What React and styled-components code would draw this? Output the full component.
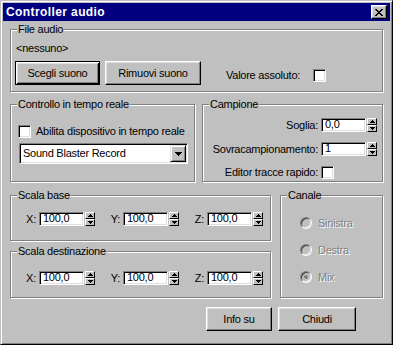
import React from "react";
import styled, { createGlobalStyle, css } from "styled-components";

const face = "#c0c0c0";

const GlobalStyle = createGlobalStyle`
  html, body {
    margin: 0;
    padding: 0;
    background: ${face};
  }
  body {
    font-family: "Liberation Sans", Arial, sans-serif;
    font-size: 11px;
    letter-spacing: -0.25px;
    color: #000;
  }
  * {
    box-sizing: border-box;
  }
`;

const Window = styled.div`
  width: 393px;
  height: 345px;
  background: ${face};
  border: 1px solid;
  border-color: ${face} #000 #000 ${face};
  box-shadow: inset 1px 1px #fff, inset -1px -1px #808080;
  padding: 2px;
  display: flex;
  flex-direction: column;
`;

const TitleBar = styled.div`
  height: 18px;
  flex: none;
  background: #000080;
  display: flex;
  align-items: center;
  justify-content: space-between;
  padding: 0 3px;
`;

const Title = styled.span`
  color: #fff;
  font-weight: bold;
  font-size: 12px;
  letter-spacing: 0.4px;
  line-height: 18px;
`;

const raised = css`
  background: ${face};
  border: 1px solid;
  border-color: #fff #000 #000 #fff;
  box-shadow: inset -1px -1px #808080, inset 1px 1px #dfdfdf;
`;

const sunken = css`
  border: 1px solid;
  border-color: #808080 #fff #fff #808080;
  box-shadow: inset 1px 1px #000, inset -1px -1px #dfdfdf;
`;

const CloseButton = styled.div`
  ${raised};
  width: 16px;
  height: 14px;
  display: flex;
  align-items: center;
  justify-content: center;
`;

const Body = styled.div`
  padding: 8px 7px 0;
  display: flex;
  flex-direction: column;
`;

const Group = styled.div`
  position: relative;
  height: ${(p) => p.$h}px;
  border: 1px solid #808080;
  box-shadow: 1px 1px 0 #fff, inset 1px 1px 0 #fff;
  padding: ${(p) => p.$pad || "0"};
`;

const Legend = styled.span`
  position: absolute;
  top: -7px;
  left: 6px;
  padding: 0 1px;
  background: ${face};
  line-height: 13px;
  white-space: nowrap;
`;

const Line = styled.div`
  line-height: 13px;
  margin-left: ${(p) => p.$ml || 0}px;
`;

const ButtonRow = styled.div`
  display: flex;
  align-items: center;
  margin-top: ${(p) => p.$mt || 0}px;
  justify-content: ${(p) => p.$justify || "flex-start"};
  padding-right: ${(p) => p.$pr || 0}px;
`;

const Button = styled.div`
  ${raised};
  width: ${(p) => p.$w}px;
  height: 24px;
  margin-left: ${(p) => p.$ml || 0}px;
  display: flex;
  align-items: center;
  justify-content: center;
  line-height: 13px;
  ${(p) =>
    p.$default &&
    css`
      border-color: #000;
      box-shadow: inset 1px 1px #fff, inset -1px -1px #000,
        inset 2px 2px #dfdfdf, inset -2px -2px #808080;
    `}
`;

const CheckField = styled.div`
  width: 100px;
  margin: 5px 0 0 ${(p) => p.$ml || 0}px;
  display: flex;
  align-items: center;
  justify-content: space-between;
  line-height: 13px;
`;

const CheckBox = styled.span`
  ${sunken};
  display: inline-block;
  flex: none;
  width: 13px;
  height: 13px;
  background: #fff;
  margin-left: ${(p) => p.$ml || 0}px;
`;

const CheckRow = styled.div`
  display: flex;
  align-items: center;
  line-height: 13px;
  white-space: nowrap;
`;

const CheckLabel = styled.span`
  margin-left: 5px;
`;

const TwoCols = styled.div`
  display: grid;
  grid-template-columns: ${(p) => p.$cols};
  column-gap: ${(p) => p.$gap}px;
  margin-top: ${(p) => p.$mt}px;
  align-items: start;
`;

const Stack = styled.div`
  display: flex;
  flex-direction: column;
  gap: ${(p) => p.$gap}px;
`;

const Combo = styled.div`
  ${sunken};
  margin: 5px 0 0 4px;
  width: 169px;
  height: 21px;
  background: #fff;
  display: flex;
  align-items: center;
  padding: 1px;
`;

const ComboText = styled.span`
  flex: 1;
  padding-left: 2px;
  line-height: 17px;
  white-space: nowrap;
`;

const DropButton = styled.div`
  width: 16px;
  height: 17px;
  background: ${face};
  border: 1px solid;
  border-color: #dfdfdf #000 #000 #dfdfdf;
  box-shadow: inset 1px 1px #fff, inset -1px -1px #808080;
  display: flex;
  align-items: center;
  justify-content: center;
`;

const FormRow = styled.div`
  display: grid;
  grid-template-columns: 1fr 56px;
  align-items: center;
  height: ${(p) => p.$h}px;
  margin-top: ${(p) => p.$mt || 0}px;
`;

const RowLabel = styled.span`
  text-align: right;
  padding-right: 3px;
  line-height: 14px;
  white-space: nowrap;
`;

const Controls = styled.div`
  display: flex;
  align-items: center;
`;

const Field = styled.div`
  ${sunken};
  width: 45px;
  height: 14px;
  background: #fff;
  padding-left: 3px;
  line-height: 10px;
  white-space: nowrap;
`;

const Spinner = styled.div`
  width: 10px;
  height: 14px;
  margin-left: 1px;
  display: flex;
  flex-direction: column;
`;

const SpinButton = styled.div`
  flex: 1;
  background: ${face};
  border: 1px solid;
  border-color: #fff #000 #000 #fff;
  display: flex;
  align-items: center;
  justify-content: center;
`;

const Trios = styled.div`
  display: flex;
  align-items: center;
`;

const AxisLabel = styled.span`
  width: 28px;
  text-align: right;
  padding-right: 3px;
  line-height: 14px;
`;

const RadioList = styled.div`
  display: flex;
  flex-direction: column;
  gap: 15px;
  padding-left: 19px;
`;

const RadioRow = styled.div`
  display: flex;
  align-items: center;
  height: 12px;
`;

const Radio = styled.span`
  width: 12px;
  height: 12px;
  flex: none;
  border-radius: 50%;
  border: 1px solid;
  border-color: #808080 #fff #fff #808080;
  box-shadow: inset 1px 1px #404040, inset -1px -1px #dfdfdf;
  background: ${face};
  display: flex;
  align-items: center;
  justify-content: center;
`;

const Dot = styled.span`
  width: 4px;
  height: 4px;
  border-radius: 50%;
  background: #808080;
`;

const DisabledText = styled.span`
  margin-left: 6px;
  color: #808080;
  text-shadow: 1px 1px 0 #fff;
  line-height: 12px;
`;

const CloseGlyph = () => (
  <svg width="8" height="7" viewBox="0 0 8 7" shapeRendering="crispEdges">
    <path
      fill="#000"
      d="M0 0h2v1H0zM6 0h2v1H6zM1 1h2v1H1zM5 1h2v1H5zM2 2h4v1H2zM3 3h2v1H3zM2 4h4v1H2zM1 5h2v1H1zM5 5h2v1H5zM0 6h2v1H0zM6 6h2v1H6z"
    />
  </svg>
);

const Arrow = ({ down }) => (
  <svg width="5" height="3" viewBox="0 0 5 3" shapeRendering="crispEdges">
    <path
      fill="#000"
      d={down ? "M0 0h5v1H0zM1 1h3v1H1zM2 2h1v1H2z" : "M2 0h1v1H2zM1 1h3v1H1zM0 2h5v1H0z"}
    />
  </svg>
);

const DropArrow = () => (
  <svg width="7" height="4" viewBox="0 0 7 4" shapeRendering="crispEdges">
    <path fill="#000" d="M0 0h7v1H0zM1 1h5v1H1zM2 2h3v1H2zM3 3h1v1H3z" />
  </svg>
);

const SpinField = ({ value }) => (
  <Controls>
    <Field>{value}</Field>
    <Spinner>
      <SpinButton>
        <Arrow />
      </SpinButton>
      <SpinButton>
        <Arrow down />
      </SpinButton>
    </Spinner>
  </Controls>
);

const XYZ = () => (
  <Trios>
    {["X", "Y", "Z"].map((axis) => (
      <Trios key={axis}>
        <AxisLabel>{axis}:</AxisLabel>
        <SpinField value="100,0" />
      </Trios>
    ))}
  </Trios>
);

const channels = [
  { label: "Sinistra", checked: false },
  { label: "Destra", checked: false },
  { label: "Mix", checked: true },
];

export default function App() {
  return (
    <>
      <GlobalStyle />
      <Window>
        <TitleBar>
          <Title>Controller audio</Title>
          <CloseButton>
            <CloseGlyph />
          </CloseButton>
        </TitleBar>
        <Body>
          <Group $h={63} $pad="12px 0 0 4px">
            <Legend>File audio</Legend>
            <Line $ml={1}>&lt;nessuno&gt;</Line>
            <ButtonRow $mt={6}>
              <Button $w={85} $default>
                Scegli suono
              </Button>
              <Button $w={96} $ml={5}>
                Rimuovi suono
              </Button>
              <CheckField $ml={25}>
                <span>Valore assoluto:</span>
                <CheckBox />
              </CheckField>
            </ButtonRow>
          </Group>

          <TwoCols $cols="185px 181px" $gap={7} $mt={12}>
            <Group $h={78} $pad="20px 0 0 4px">
              <Legend>Controllo in tempo reale</Legend>
              <CheckRow>
                <CheckBox $ml={3} />
                <CheckLabel>Abilita dispositivo in tempo reale</CheckLabel>
              </CheckRow>
              <Combo>
                <ComboText>Sound Blaster Record</ComboText>
                <DropButton>
                  <DropArrow />
                </DropButton>
              </Combo>
            </Group>
            <Group $h={78} $pad="13px 5px 0 0">
              <Legend>Campione</Legend>
              <FormRow $h={14}>
                <RowLabel>Soglia:</RowLabel>
                <SpinField value="0,0" />
              </FormRow>
              <FormRow $h={14} $mt={10}>
                <RowLabel>Sovracampionamento:</RowLabel>
                <SpinField value="1" />
              </FormRow>
              <FormRow $h={13} $mt={9}>
                <RowLabel>Editor tracce rapido:</RowLabel>
                <Controls>
                  <CheckBox />
                </Controls>
              </FormRow>
            </Group>
          </TwoCols>

          <TwoCols $cols="261px 103px" $gap={9} $mt={13}>
            <Stack $gap={10}>
              <Group $h={46} $pad="16px 0 0 0">
                <Legend>Scala base</Legend>
                <XYZ />
              </Group>
              <Group $h={47} $pad="19px 0 0 0">
                <Legend>Scala destinazione</Legend>
                <XYZ />
              </Group>
            </Stack>
            <Group $h={103} $pad="21px 0 0 0">
              <Legend>Canale</Legend>
              <RadioList>
                {channels.map((c) => (
                  <RadioRow key={c.label}>
                    <Radio>{c.checked && <Dot />}</Radio>
                    <DisabledText>{c.label}</DisabledText>
                  </RadioRow>
                ))}
              </RadioList>
            </Group>
          </TwoCols>

          <ButtonRow $mt={9} $justify="flex-end" $pr={27}>
            <Button $w={66}>Info su</Button>
            <Button $w={78} $ml={6}>
              Chiudi
            </Button>
          </ButtonRow>
        </Body>
      </Window>
    </>
  );
}
